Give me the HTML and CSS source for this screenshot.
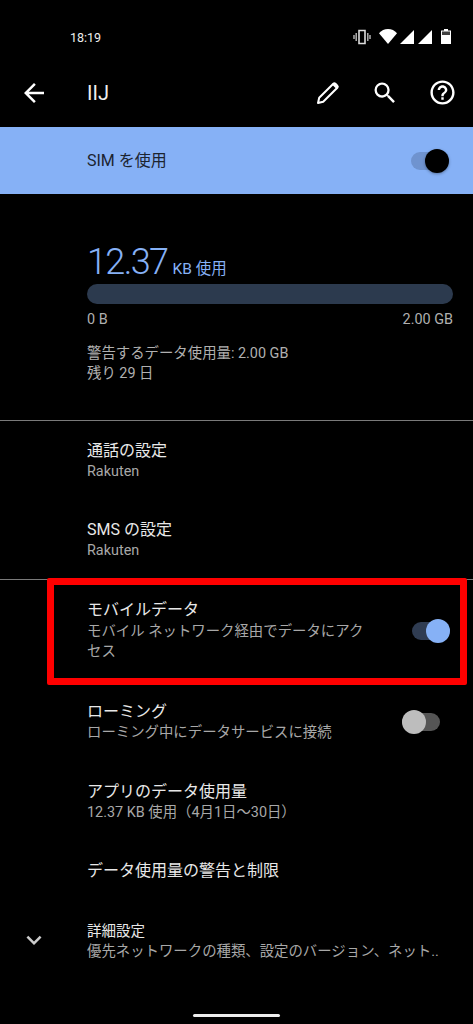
FILE: index.html
```html
<!DOCTYPE html>
<html lang="ja">
<head>
<meta charset="utf-8">
<title>IIJ</title>
<link rel="stylesheet" href="styles.css">
</head>
<body>
<div class="screen">
  <header class="status">
    <span class="time">18:19</span>
    <div class="status-icons">
      <svg class="ic-vib" viewBox="0 0 18 18"><path fill="none" stroke="#ddd" stroke-width="1.6" d="M6 2.500h6v13H6z"/><path fill="none" stroke="#bbb" stroke-width="1.4" d="M3.200 5v8M1 7v4M14.800 5v8M17 7v4"/></svg>
      <svg class="ic-wifi" viewBox="0 0 18 15"><path fill="#fff" d="M0 4.200C2.300 1.600 5.500 0 9 0s6.700 1.600 9 4.200L9 15z"/></svg>
      <svg class="ic-sig" viewBox="0 0 14 14"><path fill="#fff" d="M14 0v14H0z"/></svg>
      <svg class="ic-sig" viewBox="0 0 14 14"><path fill="#fff" d="M14 0v14H0z"/></svg>
      <svg class="ic-bat" viewBox="0 0 10 15"><path fill="#fff" d="M3 0h4v1.500h3V15H0V1.500h3z"/><path fill="#000" d="M1 2.500h8V6H1z" opacity=".75"/></svg>
    </div>
  </header>

  <nav class="appbar">
    <svg class="ic-back" viewBox="0 0 24 24"><path fill="#fff" d="M20 11H7.830l5.590-5.590L12 4l-8 8 8 8 1.410-1.410L7.830 13H20v-2z"/></svg>
    <h1 class="appbar-title">IIJ</h1>
    <svg class="ic-edit" viewBox="0 0 24 24"><path fill="none" stroke="#fff" stroke-width="2" stroke-linejoin="round" d="M2 22l1.200-5.200L17.300 2.700a1.500 1.500 0 0 1 2.100 0l1.900 1.900a1.500 1.500 0 0 1 0 2.100L7.200 20.800z"/><path fill="#fff" d="M16 3.500l4.500 4.500 1.500-1.800-4.200-4.200z"/></svg>
    <svg class="ic-search" viewBox="0 0 24 24"><path fill="#fff" d="M15.500 14h-.790l-.280-.270A6.470 6.470 0 0 0 16 9.500 6.500 6.500 0 1 0 9.500 16c1.610 0 3.090-.590 4.230-1.570l.270.280v.790l5 4.990L20.490 19l-4.990-5zm-6 0C7.010 14 5 11.990 5 9.500S7.010 5 9.500 5 14 7.010 14 9.500 11.990 14 9.500 14z"/></svg>
    <svg class="ic-help" viewBox="0 0 24 24"><path fill="#fff" d="M11 18h2v-2h-2v2zm1-16C6.480 2 2 6.480 2 12s4.480 10 10 10 10-4.480 10-10S17.520 2 12 2zm0 18c-4.410 0-8-3.590-8-8s3.590-8 8-8 8 3.590 8 8-3.590 8-8 8zm0-14c-2.210 0-4 1.790-4 4h2c0-1.100.9-2 2-2s2 .9 2 2c0 2-3 1.750-3 5h2c0-2.250 3-2.500 3-5 0-2.210-1.790-4-4-4z"/></svg>
  </nav>

  <section class="sim">
    <span class="sim-label">SIM を使用</span>
    <div class="toggle toggle-sim"><span class="track"></span><span class="thumb"></span></div>
  </section>

  <section class="usage">
    <div class="usage-head"><span class="usage-num">12.37</span><span class="usage-unit">KB 使用</span></div>
    <div class="bar"></div>
    <div class="bar-labels"><span>0 B</span><span>2.00 GB</span></div>
    <p class="usage-note">警告するデータ使用量: 2.00 GB<br>残り 29 日</p>
  </section>

  <hr class="divider">

  <div class="row row-80"><div class="row-text"><div class="title">通話の設定</div><div class="sub">Rakuten</div></div></div>
  <div class="row row-78"><div class="row-text"><div class="title">SMS の設定</div><div class="sub">Rakuten</div></div></div>

  <hr class="divider">

  <div class="row row-mobile">
    <div class="row-text narrow">
      <div class="title">モバイルデータ</div>
      <div class="sub">モバイル ネットワーク経由でデータにアクセス</div>
    </div>
    <div class="toggle toggle-on"><span class="track"></span><span class="thumb"></span></div>
    <div class="highlight"></div>
  </div>

  <div class="row row-81">
    <div class="row-text"><div class="title">ローミング</div><div class="sub">ローミング中にデータサービスに接続</div></div>
    <div class="toggle toggle-off"><span class="track"></span><span class="thumb"></span></div>
  </div>

  <div class="row row-79"><div class="row-text"><div class="title">アプリのデータ使用量</div><div class="sub">12.37 KB 使用（4月1日～30日）</div></div></div>
  <div class="row row-60"><div class="row-text"><div class="title">データ使用量の警告と制限</div></div></div>
  <div class="row row-adv">
    <svg class="ic-chev" viewBox="0 0 24 24"><path fill="#ccc" d="M16.590 8.590 12 13.170 7.410 8.590 6 10l6 6 6-6z"/></svg>
    <div class="row-text"><div class="title title-sm">詳細設定</div><div class="sub sub-clip">優先ネットワークの種類、設定のバージョン、ネット..</div></div>
  </div>

  <div class="home"><span class="home-bar"></span></div>
</div>
</body>
</html>
```

FILE: styles.css
```css
* { box-sizing: border-box; }
html, body { margin: 0; padding: 0; background: #000; }
body { font-family: Roboto, "Noto Sans CJK JP", sans-serif; color: #eee; }
.screen { width: 473px; height: 1024px; overflow: hidden; background: #000; display: flex; flex-direction: column; }

.status { height: 74px; flex: none; display: flex; justify-content: space-between; align-items: center; padding: 0 22px 0 70px; }
.time { font-size: 12.5px; color: #eee; }
.status-icons { display: flex; align-items: center; margin-bottom: 1px; }
.ic-vib { width: 18px; height: 18px; margin-right: 8px; }
.ic-wifi { width: 18px; height: 15px; margin-right: 3px; }
.ic-sig { width: 14px; height: 14px; margin-right: 4px; }
.ic-bat { width: 10px; height: 15px; margin-left: 5px; }

.appbar { height: 53px; flex: none; display: flex; align-items: center; padding: 0 16px 16px 19px; }
.ic-back { width: 30px; height: 30px; flex: none; }
.appbar-title { font-size: 20px; font-weight: 400; margin: 0 0 0 38px; color: #eee; flex: 1; }
.ic-edit { width: 24px; height: 24px; margin-right: 31px; }
.ic-search { width: 28px; height: 28px; margin-right: 29px; }
.ic-help { width: 29px; height: 29px; }

.sim { height: 67px; flex: none; background: #86b1f6; display: flex; align-items: center; justify-content: space-between; padding: 0 24px 0 87px; }
.sim-label { font-size: 16px; color: #1c2430; margin-bottom: 3px; }

.toggle { position: relative; width: 38px; height: 24px; flex: none; }
.track { position: absolute; left: 0; right: 0; top: 3px; height: 18px; border-radius: 9px; }
.thumb { position: absolute; top: 0; width: 24px; height: 24px; border-radius: 50%; }
.toggle-sim .track { background: #6f93cf; }
.toggle-sim .thumb { right: 0; background: #000; box-shadow: 0 1px 3px rgba(0,0,0,.35); }
.toggle-on .track { background: #2f3c52; }
.toggle-on .thumb { right: 0; background: #86b1f6; }
.toggle-off .track { background: #555; }
.toggle-off .thumb { left: 0; background: #bdbdbd; }

.usage { height: 226px; flex: none; padding: 46px 20px 0 87px; }
.usage-head { display: flex; align-items: baseline; height: 44px; }
.usage-num { font-size: 36px; line-height: 44px; color: #86b1f6; font-weight: 300; letter-spacing: -1.6px; }
.usage-unit { font-size: 15.5px; color: #86b1f6; margin-left: 5px; }
.bar { height: 20px; border-radius: 10px; background: #2c3a4e; }
.bar-labels { display: flex; justify-content: space-between; font-size: 14.4px; line-height: 20px; color: #b0b0b0; margin-top: 6px; }
.usage-note { margin: 14px 0 0; font-size: 14.4px; line-height: 20px; color: #b0b0b0; }

.divider { margin: 0; border: 0; height: 1px; background: #7a7a7a; flex: none; }

.row { position: relative; flex: none; display: flex; align-items: center; padding-left: 87px; }
.row-78 { height: 78px; }
.row-79 { height: 79px; }
.row-80 { height: 80px; }
.row-81 { height: 81px; padding-right: 33px; justify-content: space-between; }
.row-60 { height: 60px; }
.row-adv { height: 82px; padding-left: 19px; }
.row-mobile { height: 101px; padding-right: 23px; justify-content: space-between; }
.row-text { min-width: 0; }
.narrow { width: 282px; }
.narrow .title { margin-bottom: 2px; }
.title { font-size: 16px; line-height: 21px; margin-bottom: 1px; color: #e8e8e8; }
.title-sm { font-size: 14.5px; line-height: 20px; margin-bottom: 0; }
.sub { font-size: 14.4px; line-height: 20px; color: #a8a8a8; }
.sub-clip { white-space: nowrap; }
.ic-chev { width: 30px; height: 30px; flex: none; margin-right: 38px; margin-bottom: 4px; }

.highlight { position: absolute; left: 47px; top: -2px; width: 420px; height: 107px; border: 7px solid #f00; border-radius: 2px; }

.home { flex: 1; display: flex; justify-content: center; align-items: flex-end; padding-bottom: 7px; }
.home-bar { width: 87px; height: 3px; background: #eee; border-radius: 2px; }
```
